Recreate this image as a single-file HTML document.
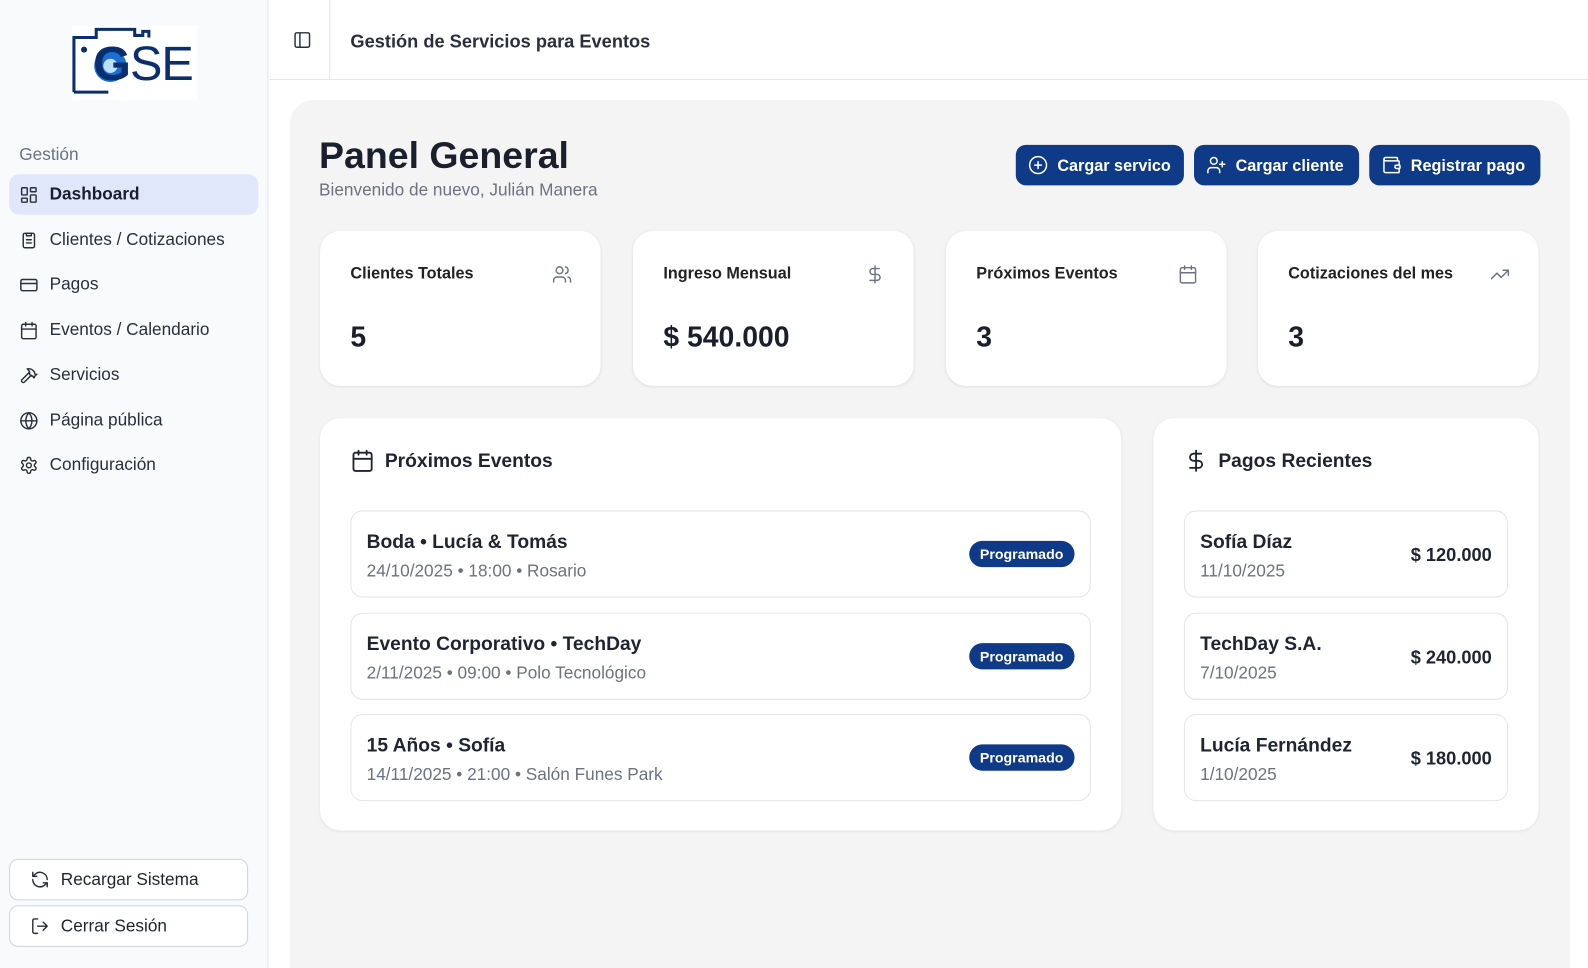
<!DOCTYPE html>
<html><head><meta charset="utf-8"><style>
*{box-sizing:border-box;margin:0;padding:0}
html,body{width:1588px;height:968px;overflow:hidden}
body{font-family:"Liberation Sans",sans-serif;color:#1f2430;background:#fff;position:relative}
#w{position:absolute;left:0;top:0;width:1568px;height:956px;transform:scale(1.01276);transform-origin:0 0;overflow:hidden}
.side{position:absolute;left:0;top:0;width:265px;height:956px;background:#f8fafc;border-right:1px solid #e5e7eb}
.nav{position:absolute;left:9px;width:246px;height:40px;display:flex;align-items:center;padding-left:10px;font-size:17px;color:#2a2f3a;border-radius:10px}
.nav svg{width:19px;height:19px;margin-right:11px;fill:none;stroke:#2a2f3a;stroke-width:1.8;stroke-linecap:round;stroke-linejoin:round}
.nav.act{background:#e0e7fb;font-weight:bold;color:#1a1f2c}
.sb{position:absolute;left:9px;width:236px;height:41px;border:1px solid #cfd4dc;border-radius:9px;display:flex;align-items:center;padding-left:20px;font-size:17px;background:#fff}
.sb svg{width:19px;height:19px;margin-right:11px;fill:none;stroke:#2a2f3a;stroke-width:1.8;stroke-linecap:round;stroke-linejoin:round}
.hdr{position:absolute;left:266px;top:0;right:0;height:79px;border-bottom:1px solid #e5e7eb}
.panel{position:absolute;left:286px;top:99px;width:1264px;height:900px;background:#f4f4f5;border-radius:24px}
.btn{position:absolute;top:143px;height:40px;background:#0f3a87;color:#fff;border-radius:10px;font-weight:bold;font-size:16px;display:flex;align-items:center;padding-left:12px;padding-top:3px;white-space:nowrap}
.btn svg{width:20px;height:20px;margin-right:9px;margin-top:-3px;fill:none;stroke:#fff;stroke-width:1.8;stroke-linecap:round;stroke-linejoin:round}
.card{position:absolute;background:#fff;border-radius:20px;box-shadow:0 1px 3px rgba(0,0,0,.08)}
.stat{top:228px;width:277px;height:153px}
.stat .t{position:absolute;left:30px;top:34px;font-size:16px;font-weight:bold;color:#222}
.stat .v{position:absolute;left:30px;top:89px;font-size:28px;font-weight:bold;color:#1a1f2c}
.stat svg{position:absolute;right:28px;top:33px;width:20px;height:20px;fill:none;stroke:#6b7280;stroke-width:1.7;stroke-linecap:round;stroke-linejoin:round}
.sec h3{position:absolute;left:64px;top:32px;font-size:19px;font-weight:bold}
.sec .hi{position:absolute;left:30px;top:30px;width:24px;height:24px;fill:none;stroke:#1f2430;stroke-width:1.8;stroke-linecap:round;stroke-linejoin:round}
.row{position:absolute;left:30px;height:86px;border:1px solid #e3e5e9;border-radius:12px;background:#fff}
.row .a{position:absolute;left:15px;top:20px;font-size:19px;font-weight:bold;color:#1f2430}
.row .b{position:absolute;left:15px;top:49px;font-size:17px;color:#6b7280}
.badge{position:absolute;right:15px;top:29px;background:#0f3a87;color:#fff;font-size:14px;font-weight:bold;padding:5px 11px;border-radius:14px}
.amt{position:absolute;right:15px;top:33px;font-size:18px;font-weight:bold}
</style></head><body><div id="w">
<div class="side">
 <div style="position:absolute;left:71px;top:25px;width:124px;height:74px;background:#fff"></div>
 <svg style="position:absolute;left:71px;top:27px" width="124" height="70" viewBox="0 0 124 70">
  <path d="M2 64V10h22V2h38v6h8v-4h6v6" fill="none" stroke="#0a2e6e" stroke-width="3"/>
  <path d="M2 64h34" fill="none" stroke="#0a2e6e" stroke-width="3"/>
  <circle cx="12" cy="22" r="3" fill="#0a2e6e"/>
  <circle cx="38" cy="38" r="16" fill="#1a6fd0"/>
  <circle cx="38" cy="38" r="7" fill="#bfe0ff"/>
 </svg>
 <div style="position:absolute;left:92px;top:36px;font-size:48px;font-weight:bold;color:#0a2e6e;letter-spacing:-1px">G<span style="font-weight:normal">SE</span></div>
 <div style="position:absolute;left:19px;top:143px;font-size:17px;color:#6b7280">Gestión</div>
 <div class="nav act" style="top:172px"><svg viewBox="0 0 24 24"><rect x="3" y="3" width="7" height="9" rx="1"/><rect x="14" y="3" width="7" height="5" rx="1"/><rect x="14" y="12" width="7" height="9" rx="1"/><rect x="3" y="16" width="7" height="5" rx="1"/></svg>Dashboard</div>
 <div class="nav" style="top:217px"><svg viewBox="0 0 24 24"><rect x="5" y="3" width="14" height="18" rx="2"/><path d="M9 3h6v3H9zM9 11h6M9 15h6"/></svg>Clientes / Cotizaciones</div>
 <div class="nav" style="top:261px"><svg viewBox="0 0 24 24"><rect x="2" y="5" width="20" height="14" rx="2"/><path d="M2 10h20"/></svg>Pagos</div>
 <div class="nav" style="top:306px"><svg viewBox="0 0 24 24"><rect x="3" y="4" width="18" height="18" rx="2"/><path d="M16 2v4M8 2v4M3 10h18"/></svg>Eventos / Calendario</div>
 <div class="nav" style="top:350px"><svg viewBox="0 0 24 24"><path d="M15 12l-8.5 8.5a2.1 2.1 0 01-3-3L12 9M17.6 15L22 10.6M20.9 11.7l-1.3-1.3a2 2 0 01-.6-1.4V7.9L16.7 5.6A5.6 5.6 0 0012.7 4H9.9l.9.8A6.2 6.2 0 0113 9.5V11l2 2h1.2a2 2 0 011.4.6l1.3 1.3"/></svg>Servicios</div>
 <div class="nav" style="top:395px"><svg viewBox="0 0 24 24"><circle cx="12" cy="12" r="10"/><path d="M2 12h20M12 2a15 15 0 010 20M12 2a15 15 0 000 20"/></svg>Página pública</div>
 <div class="nav" style="top:439px"><svg viewBox="0 0 24 24"><circle cx="12" cy="12" r="3"/><path d="M12.2 2h-.4a2 2 0 00-2 2v.2a2 2 0 01-1 1.7l-.4.3a2 2 0 01-2 0l-.2-.1a2 2 0 00-2.7.7l-.2.4a2 2 0 00.7 2.7l.2.1a2 2 0 011 1.7v.5a2 2 0 01-1 1.7l-.2.1a2 2 0 00-.7 2.7l.2.4a2 2 0 002.7.7l.2-.1a2 2 0 012 0l.4.3a2 2 0 011 1.7v.2a2 2 0 002 2h.4a2 2 0 002-2v-.2a2 2 0 011-1.7l.4-.3a2 2 0 012 0l.2.1a2 2 0 002.7-.7l.2-.4a2 2 0 00-.7-2.7l-.2-.1a2 2 0 01-1-1.7v-.5a2 2 0 011-1.7l.2-.1a2 2 0 00.7-2.7l-.2-.4a2 2 0 00-2.7-.7l-.2.1a2 2 0 01-2 0l-.4-.3a2 2 0 01-1-1.7V4a2 2 0 00-2-2z"/></svg>Configuración</div>
 <div class="sb" style="top:848px"><svg viewBox="0 0 24 24"><path d="M21 12a9 9 0 00-15-6.7L3 8M3 3v5h5M3 12a9 9 0 0015 6.7l3-2.7M21 21v-5h-5"/></svg>Recargar Sistema</div>
 <div class="sb" style="top:894px"><svg viewBox="0 0 24 24"><path d="M9 21H5a2 2 0 01-2-2V5a2 2 0 012-2h4M16 17l5-5-5-5M21 12H9"/></svg>Cerrar Sesión</div>
</div>
<div class="hdr">
 <svg style="position:absolute;left:23px;top:30px" width="19" height="19" viewBox="0 0 24 24" fill="none" stroke="#2a2f3a" stroke-width="1.8"><rect x="3" y="3" width="18" height="18" rx="2"/><path d="M9 3v18"/></svg>
 <div style="position:absolute;left:59px;top:0;width:1px;height:78px;background:#e5e7eb"></div>
 <div style="position:absolute;left:80px;top:31px;font-size:18px;font-weight:bold;color:#2a2f3a">Gestión de Servicios para Eventos</div>
</div>
<div class="panel"></div>
<div style="position:absolute;left:315px;top:133px;font-size:37px;font-weight:bold;color:#1a1f2c">Panel General</div>
<div style="position:absolute;left:315px;top:178px;font-size:17px;color:#6b7280">Bienvenido de nuevo, Julián Manera</div>
<div class="btn" style="left:1003px;width:166px"><svg viewBox="0 0 24 24"><circle cx="12" cy="12" r="10"/><path d="M8 12h8M12 8v8"/></svg>Cargar servico</div>
<div class="btn" style="left:1179px;width:163px"><svg viewBox="0 0 24 24"><path d="M2 21v-2a4 4 0 014-4h6a4 4 0 014 4v2"/><circle cx="9" cy="7" r="4"/><path d="M19 8v6M22 11h-6"/></svg>Cargar cliente</div>
<div class="btn" style="left:1352px;width:169px"><svg viewBox="0 0 24 24"><path d="M19 7V4a1 1 0 00-1-1H5a2 2 0 000 4h15a1 1 0 011 1v4h-3a2 2 0 000 4h3a1 1 0 001-1v-2a1 1 0 00-1-1"/><path d="M3 5v14a2 2 0 002 2h15a1 1 0 001-1v-4"/></svg>Registrar pago</div>

<div class="card stat" style="left:316px"><div class="t">Clientes Totales</div><div class="v">5</div><svg viewBox="0 0 24 24"><path d="M16 21v-2a4 4 0 00-4-4H6a4 4 0 00-4 4v2"/><circle cx="9" cy="7" r="4"/><path d="M22 21v-2a4 4 0 00-3-3.9M16 3.1a4 4 0 010 7.8"/></svg></div>
<div class="card stat" style="left:625px"><div class="t">Ingreso Mensual</div><div class="v">$ 540.000</div><svg viewBox="0 0 24 24"><path d="M12 2v20M17 5H9.5a3.5 3.5 0 000 7h5a3.5 3.5 0 010 7H6"/></svg></div>
<div class="card stat" style="left:934px"><div class="t">Próximos Eventos</div><div class="v">3</div><svg viewBox="0 0 24 24"><rect x="3" y="4" width="18" height="18" rx="2"/><path d="M16 2v4M8 2v4M3 10h18"/></svg></div>
<div class="card stat" style="left:1242px"><div class="t">Cotizaciones del mes</div><div class="v">3</div><svg viewBox="0 0 24 24"><path d="M22 7l-8.5 8.5-5-5L2 17M16 7h6v6"/></svg></div>

<div class="card sec" style="left:316px;top:413px;width:791px;height:407px">
 <svg class="hi" viewBox="0 0 24 24"><rect x="3" y="4" width="18" height="18" rx="2"/><path d="M16 2v4M8 2v4M3 10h18"/></svg>
 <h3>Próximos Eventos</h3>
 <div class="row" style="top:91px;width:731px"><div class="a">Boda • Lucía &amp; Tomás</div><div class="b">24/10/2025 • 18:00 • Rosario</div><div class="badge">Programado</div></div>
 <div class="row" style="top:192px;width:731px"><div class="a">Evento Corporativo • TechDay</div><div class="b">2/11/2025 • 09:00 • Polo Tecnológico</div><div class="badge">Programado</div></div>
 <div class="row" style="top:292px;width:731px"><div class="a">15 Años • Sofía</div><div class="b">14/11/2025 • 21:00 • Salón Funes Park</div><div class="badge">Programado</div></div>
</div>
<div class="card sec" style="left:1139px;top:413px;width:380px;height:407px">
 <svg class="hi" viewBox="0 0 24 24"><path d="M12 2v20M17 5H9.5a3.5 3.5 0 000 7h5a3.5 3.5 0 010 7H6"/></svg>
 <h3>Pagos Recientes</h3>
 <div class="row" style="top:91px;width:320px"><div class="a">Sofía Díaz</div><div class="b">11/10/2025</div><div class="amt">$ 120.000</div></div>
 <div class="row" style="top:192px;width:320px"><div class="a">TechDay S.A.</div><div class="b">7/10/2025</div><div class="amt">$ 240.000</div></div>
 <div class="row" style="top:292px;width:320px"><div class="a">Lucía Fernández</div><div class="b">1/10/2025</div><div class="amt">$ 180.000</div></div>
</div>
</div></body></html>
